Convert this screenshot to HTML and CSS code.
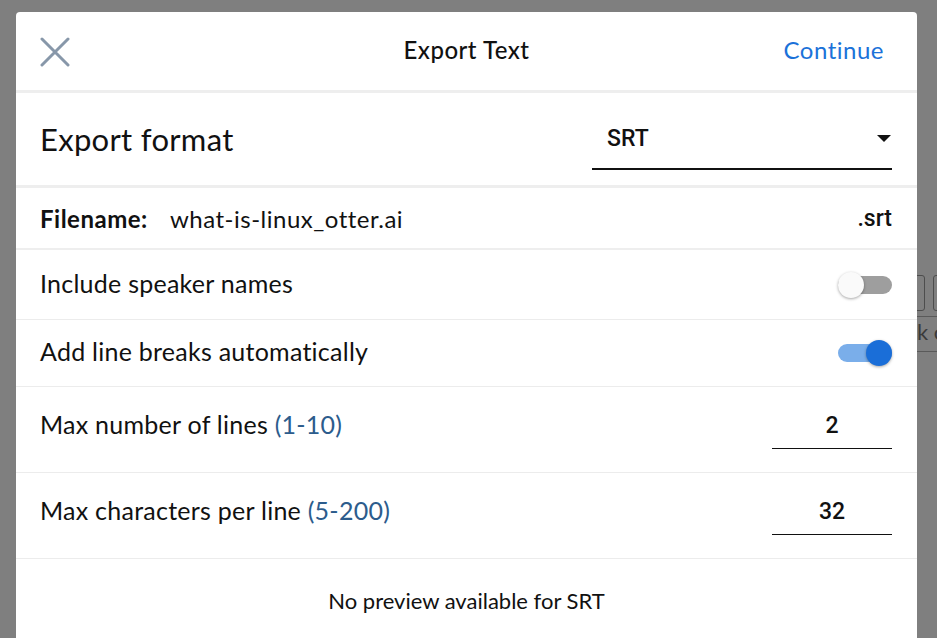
FILE: index.html
```html
<!DOCTYPE html>
<html>
<head>
<meta charset="utf-8">
<link rel="stylesheet" href="styles.css">
</head>
<body>
<div class="behind">
  <span class="bk-box bk-box1"></span>
  <span class="bk-box bk-box2"></span>
  <span class="bk-text">k c</span>
</div>
<div class="modal">
  <div class="header">
    <button class="close" aria-label="Close">
      <svg width="30" height="30" viewBox="0 0 30 30"><path d="M2 2 L28 28 M28 2 L2 28" stroke="#8797a9" stroke-width="3" stroke-linecap="round" fill="none"/></svg>
    </button>
    <div class="title">Export Text</div>
    <div class="continue">Continue</div>
  </div>
  <div class="row row-format">
    <div class="format-label">Export format</div>
    <div class="select">
      <span class="select-value">SRT</span>
      <span class="caret"></span>
    </div>
  </div>
  <div class="row row-filename">
    <div class="fn-label">Filename:</div>
    <div class="fn-value">what-is-linux_otter.ai</div>
    <div class="fn-ext">.srt</div>
  </div>
  <div class="row row-toggle row-speaker">
    <div class="label">Include speaker names</div>
    <div class="toggle"><span class="thumb"></span></div>
  </div>
  <div class="row row-toggle row-breaks">
    <div class="label">Add line breaks automatically</div>
    <div class="toggle on"><span class="thumb"></span></div>
  </div>
  <div class="row row-num">
    <div class="label">Max number of lines <span class="range">(1-10)</span></div>
    <div class="num-input">2</div>
  </div>
  <div class="row row-num">
    <div class="label">Max characters per line <span class="range">(5-200)</span></div>
    <div class="num-input">32</div>
  </div>
  <div class="preview">No preview available for SRT</div>
</div>
</body>
</html>
```

FILE: styles.css
```css
html, body {
  margin: 0;
  padding: 0;
  height: 100%;
  overflow: hidden;
}
body {
  background: #7f7f7f;
  font-family: Lato, "Noto Sans", sans-serif;
  color: #111;
  position: relative;
}
.behind {
  position: absolute;
  left: 917px;
  top: 270px;
  width: 40px;
  height: 100px;
}
.bk-box {
  position: absolute;
  top: 5px;
  width: 12px;
  height: 34px;
  border: 1px solid #4d4d4d;
  border-radius: 3px;
}
.bk-box1 { left: -6px; }
.bk-box2 { left: 16px; }
.bk-text {
  position: absolute;
  left: 0;
  top: 46px;
  padding-bottom: 4px;
  border-top: 1px solid #5a5a5a;
  border-bottom: 1px solid #5a5a5a;
  font-size: 22px;
  color: #3a3a3a;
  line-height: 30px;
  width: 40px;
}
.modal {
  position: relative;
  margin: 12px 0 0 16px;
  width: 901px;
  height: 640px;
  background: #fff;
  border-radius: 4px 4px 0 0;
}
.header {
  height: 78px;
  display: grid;
  grid-template-columns: 1fr auto 1fr;
  align-items: center;
  padding: 0 24px;
  border-bottom: 3px solid #eeeeee;
}
.close {
  border: 0;
  background: none;
  padding: 0;
  width: 30px;
  height: 30px;
  display: flex;
  margin-top: 2px;
}
.title {
  font-size: 24px;
  font-weight: 500;
  letter-spacing: 0.5px;
  color: #111;
  margin-top: -3px;
}
.continue {
  justify-self: end;
  margin-right: 9px;
  font-size: 24px;
  letter-spacing: 0.5px;
  color: #1b72d9;
  margin-top: -3px;
}
.row {
  display: flex;
  align-items: center;
  padding: 0 25px 0 24px;
  border-bottom: 1px solid #ececec;
}
.row-format {
  height: 92px;
  justify-content: space-between;
  border-bottom: 3px solid #eeeeee;
}
.format-label {
  font-size: 31px;
  letter-spacing: 0.3px;
  color: #111;
}
.select {
  width: 300px;
  height: 62px;
  box-sizing: border-box;
  border-bottom: 2px solid #111;
  display: flex;
  align-items: center;
  justify-content: space-between;
  padding: 0 1px 0 15px;
}
.select-value {
  font-family: Roboto, "Noto Sans", sans-serif;
  font-size: 23px;
  font-weight: 500;
  color: #111;
}
.caret {
  width: 0;
  height: 0;
  border-left: 7px solid transparent;
  border-right: 7px solid transparent;
  border-top: 7px solid #111;
}
.row-filename {
  height: 60px;
  border-bottom: 2px solid #eeeeee;
  font-size: 24px;
  letter-spacing: 0.5px;
}
.fn-label {
  font-weight: 700;
  width: 130px;
}
.fn-value {
  flex: 1;
}
.fn-ext {
  font-family: Roboto, "Noto Sans", sans-serif;
  font-size: 23px;
  font-weight: 500;
  letter-spacing: 0;
}
.label {
  font-size: 25px;
  letter-spacing: 0.25px;
  color: #111;
  flex: 1;
  margin-bottom: 4px;
}
.row-speaker { height: 69px; }
.row-breaks { height: 66px; }
.toggle {
  position: relative;
  width: 54px;
  height: 18px;
  border-radius: 9px;
  background: #9e9e9e;
}
.toggle .thumb {
  position: absolute;
  top: -4px;
  left: 0;
  width: 26px;
  height: 26px;
  border-radius: 50%;
  background: #fafafa;
  box-shadow: 0 1px 3px rgba(0,0,0,0.35);
}
.toggle.on { background: #7aaeea; }
.toggle.on .thumb {
  left: auto;
  right: 0;
  background: #1a6ed8;
}
.row-num { height: 85px; }
.row-num .label { margin-bottom: 12px; }
.range { color: #2c5c8c; }
.num-input {
  width: 120px;
  height: 46px;
  box-sizing: border-box;
  border-bottom: 1px solid #111;
  text-align: center;
  font-family: Roboto, "Noto Sans", sans-serif;
  font-size: 23px;
  font-weight: 500;
  line-height: 26px;
  padding-top: 10px;
  margin-bottom: 8px;
}
.preview {
  text-align: center;
  font-size: 22px;
  padding-top: 28px;
}
```
